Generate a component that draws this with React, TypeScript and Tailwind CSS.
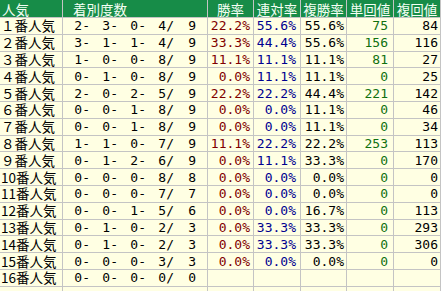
const rows: [string, number[], string, string, string, string, string][] = [
  ["１番人気", [2, 3, 0, 4, 9], "22.2%", "55.6%", "55.6%", "75", "84"],
  ["２番人気", [3, 1, 1, 4, 9], "33.3%", "44.4%", "55.6%", "156", "116"],
  ["３番人気", [1, 0, 0, 8, 9], "11.1%", "11.1%", "11.1%", "81", "27"],
  ["４番人気", [0, 1, 0, 8, 9], "0.0%", "11.1%", "11.1%", "0", "25"],
  ["５番人気", [2, 0, 2, 5, 9], "22.2%", "22.2%", "44.4%", "221", "142"],
  ["６番人気", [0, 0, 1, 8, 9], "0.0%", "0.0%", "11.1%", "0", "46"],
  ["７番人気", [0, 0, 1, 8, 9], "0.0%", "0.0%", "11.1%", "0", "34"],
  ["８番人気", [1, 1, 0, 7, 9], "11.1%", "22.2%", "22.2%", "253", "113"],
  ["９番人気", [0, 1, 2, 6, 9], "0.0%", "11.1%", "33.3%", "0", "170"],
  ["10番人気", [0, 0, 0, 8, 8], "0.0%", "0.0%", "0.0%", "0", "0"],
  ["11番人気", [0, 0, 0, 7, 7], "0.0%", "0.0%", "0.0%", "0", "0"],
  ["12番人気", [0, 0, 1, 5, 6], "0.0%", "0.0%", "16.7%", "0", "113"],
  ["13番人気", [0, 1, 0, 2, 3], "0.0%", "33.3%", "33.3%", "0", "293"],
  ["14番人気", [0, 1, 0, 2, 3], "0.0%", "33.3%", "33.3%", "0", "306"],
  ["15番人気", [0, 0, 0, 3, 3], "0.0%", "0.0%", "0.0%", "0", "0"],
  ["16番人気", [0, 0, 0, 0, 0], "", "", "", "", ""],
];

const jp = "font-['Noto_Sans_CJK_JP',sans-serif]";
const num = "font-['DejaVu_Sans_Mono',monospace]";
const cell = "flex items-center bg-[#ffffe3] leading-[15px]";

function Head({ children, className = "" }: { children: React.ReactNode; className?: string }) {
  return (
    <div className={`flex items-center bg-[#178c48] text-[#f4fff4] text-[13.5px] leading-[16px] ${jp} ${className}`}>
      {children}
    </div>
  );
}

export default function App() {
  return (
    <div className="w-[444px] h-[291px] overflow-hidden bg-white">
      <div className="grid w-[441px] grid-cols-[62px_144px_45px_46px_45px_46px_46px] grid-rows-[17px_repeat(17,15.8px)] gap-px bg-[#c4c4c4] pr-px">
        <Head className="pl-[2px]">人気</Head>
        <Head className="pl-[10px]">着別度数</Head>
        <Head className="justify-center">勝率</Head>
        <Head className="justify-center">連対率</Head>
        <Head className="justify-center">複勝率</Head>
        <Head className="justify-center">単回値</Head>
        <Head className="justify-center">複回値</Head>

        {rows.map((r, i) => {
          const [name, c, win, ren, fuku, tan, fk] = r;
          return (
            <div key={i} className="contents">
              <div className={`${cell} pl-[1px] text-[13.5px] ${jp}`}>{name}</div>
              <div className={`${cell} text-[13px] ${num}`}>
                <span className="w-[27px] text-right">{c[0]}-</span>
                <span className="w-[28px] text-right">{c[1]}-</span>
                <span className="w-[28px] text-right">{c[2]}-</span>
                <span className="w-[28px] text-right">{c[3]}/</span>
                <span className="w-[22px] text-right">{c[4]}</span>
              </div>
              <div className={`${cell} justify-end pr-[3px] text-[13px] text-[#800000] ${num}`}>{win}</div>
              <div className={`${cell} justify-end pr-[4px] text-[13px] text-[#000090] ${num}`}>{ren}</div>
              <div className={`${cell} justify-end pr-[2px] text-[13px] text-black ${num}`}>{fuku}</div>
              <div className={`${cell} justify-end pr-[5px] text-[13px] text-[#107010] ${num}`}>{tan}</div>
              <div className={`${cell} justify-end pr-[2px] text-[13px] text-black ${num}`}>{fk}</div>
            </div>
          );
        })}
        {Array.from({ length: 7 }, (_, j) => (
          <div key={`e${j}`} className="bg-[#ffffe3]" />
        ))}
      </div>
    </div>
  );
}
